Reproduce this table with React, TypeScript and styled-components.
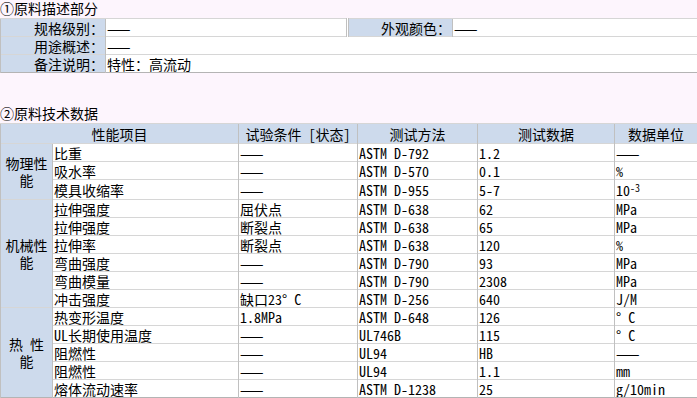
import React from "react";
import styled, { createGlobalStyle } from "styled-components";

const Global = createGlobalStyle`
  html, body { margin: 0; padding: 0; background: #fdf5fd; }
  body {
    font-family: "Noto Sans Mono CJK SC", "Noto Sans CJK SC", "Liberation Mono", monospace;
    font-size: 14px;
    color: #000;
  }
`;

const Page = styled.div`
  width: 697px;
  display: flex;
  flex-direction: column;
`;

const SectionTitle = styled.div<{ $top?: number }>`
  height: 18px;
  line-height: 16px;
  margin-top: ${(p) => p.$top ?? 0}px;
  white-space: nowrap;
`;

const Table = styled.table`
  width: 697px;
  table-layout: fixed;
  border-collapse: collapse;
  border: 1px solid #b4b4b4;
  background: #fff;
`;

const Cell = styled.td<{ $h?: number; $align?: string; $blue?: boolean; $split?: boolean }>`
  height: ${(p) => p.$h ?? 17}px;
  padding: 0 1px;
  line-height: 16px;
  text-align: ${(p) => p.$align ?? "left"};
  vertical-align: middle;
  background: ${(p) => (p.$blue ? "#cddaec" : "#fff")};
  border-left: ${(p) => (p.$split ? "3px double #c0c0c0" : "1px solid #c0c0c0")};
  border-top: 1px solid #d6d6d6;
  white-space: nowrap;
  overflow: hidden;
`;

const GroupCell = styled(Cell)`
  white-space: normal;
  text-align: center;
  padding: 0 4px;
  line-height: 17px;
`;

const Sup = styled.sup`
  font-size: 10px;
  vertical-align: top;
  position: relative;
  top: -2px;
`;

type Row = { item: string; cond: string; method: string; data: string; unit: React.ReactNode; h?: number };

const groups: { name: string; rows: Row[] }[] = [
  {
    name: "物理性能",
    rows: [
      { item: "比重", cond: "——", method: "ASTM D-792", data: "1.2", unit: "——" },
      { item: "吸水率", cond: "——", method: "ASTM D-570", data: "0.1", unit: "%" },
      {
        item: "模具收缩率",
        cond: "——",
        method: "ASTM D-955",
        data: "5-7",
        unit: (
          <>
            10<Sup>-3</Sup>
          </>
        ),
        h: 19,
      },
    ],
  },
  {
    name: "机械性能",
    rows: [
      { item: "拉伸强度", cond: "屈伏点", method: "ASTM D-638", data: "62", unit: "MPa" },
      { item: "拉伸强度", cond: "断裂点", method: "ASTM D-638", data: "65", unit: "MPa" },
      { item: "拉伸率", cond: "断裂点", method: "ASTM D-638", data: "120", unit: "%" },
      { item: "弯曲强度", cond: "——", method: "ASTM D-790", data: "93", unit: "MPa" },
      { item: "弯曲模量", cond: "——", method: "ASTM D-790", data: "2308", unit: "MPa" },
      { item: "冲击强度", cond: "缺口23° C", method: "ASTM D-256", data: "640", unit: "J/M" },
    ],
  },
  {
    name: "热 性能",
    rows: [
      { item: "热变形温度", cond: "1.8MPa", method: "ASTM D-648", data: "126", unit: "° C" },
      { item: "UL长期使用温度", cond: "——", method: "UL746B", data: "115", unit: "° C" },
      { item: "阻燃性", cond: "——", method: "UL94", data: "HB", unit: "——" },
      { item: "阻燃性", cond: "——", method: "UL94", data: "1.1", unit: "mm" },
      { item: "熔体流动速率", cond: "——", method: "ASTM D-1238", data: "25", unit: "g/10min" },
    ],
  },
];

export default function App() {
  return (
    <Page>
      <Global />
      <SectionTitle>①原料描述部分</SectionTitle>
      <Table>
        <colgroup>
          <col style={{ width: 105 }} />
          <col style={{ width: 242 }} />
          <col style={{ width: 105 }} />
          <col style={{ width: 245 }} />
        </colgroup>
        <tbody>
          <tr>
            <Cell $blue $align="right">规格级别：</Cell>
            <Cell>——</Cell>
            <Cell $blue $align="right" $split>外观颜色：</Cell>
            <Cell>——</Cell>
          </tr>
          <tr>
            <Cell $blue $align="right">用途概述：</Cell>
            <Cell colSpan={3}>——</Cell>
          </tr>
          <tr>
            <Cell $blue $align="right">备注说明：</Cell>
            <Cell colSpan={3}>特性：高流动</Cell>
          </tr>
        </tbody>
      </Table>
      <SectionTitle $top={32}>②原料技术数据</SectionTitle>
      <Table>
        <colgroup>
          <col style={{ width: 52 }} />
          <col style={{ width: 186 }} />
          <col style={{ width: 119 }} />
          <col style={{ width: 120 }} />
          <col style={{ width: 137 }} />
          <col style={{ width: 83 }} />
        </colgroup>
        <tbody>
          <tr>
            <Cell $blue $align="center" $h={19} colSpan={2}>性能项目</Cell>
            <Cell $blue $align="center" $h={19}>试验条件 [状态]</Cell>
            <Cell $blue $align="center" $h={19}>测试方法</Cell>
            <Cell $blue $align="center" $h={19}>测试数据</Cell>
            <Cell $blue $align="center" $h={19}>数据单位</Cell>
          </tr>
          {groups.map((g) =>
            g.rows.map((r, i) => (
              <tr key={g.name + i}>
                {i === 0 && (
                  <GroupCell $blue rowSpan={g.rows.length}>
                    {g.name}
                  </GroupCell>
                )}
                <Cell $h={r.h}>{r.item}</Cell>
                <Cell $h={r.h}>{r.cond}</Cell>
                <Cell $h={r.h}>{r.method}</Cell>
                <Cell $h={r.h}>{r.data}</Cell>
                <Cell $h={r.h}>{r.unit}</Cell>
              </tr>
            ))
          )}
        </tbody>
      </Table>
    </Page>
  );
}
